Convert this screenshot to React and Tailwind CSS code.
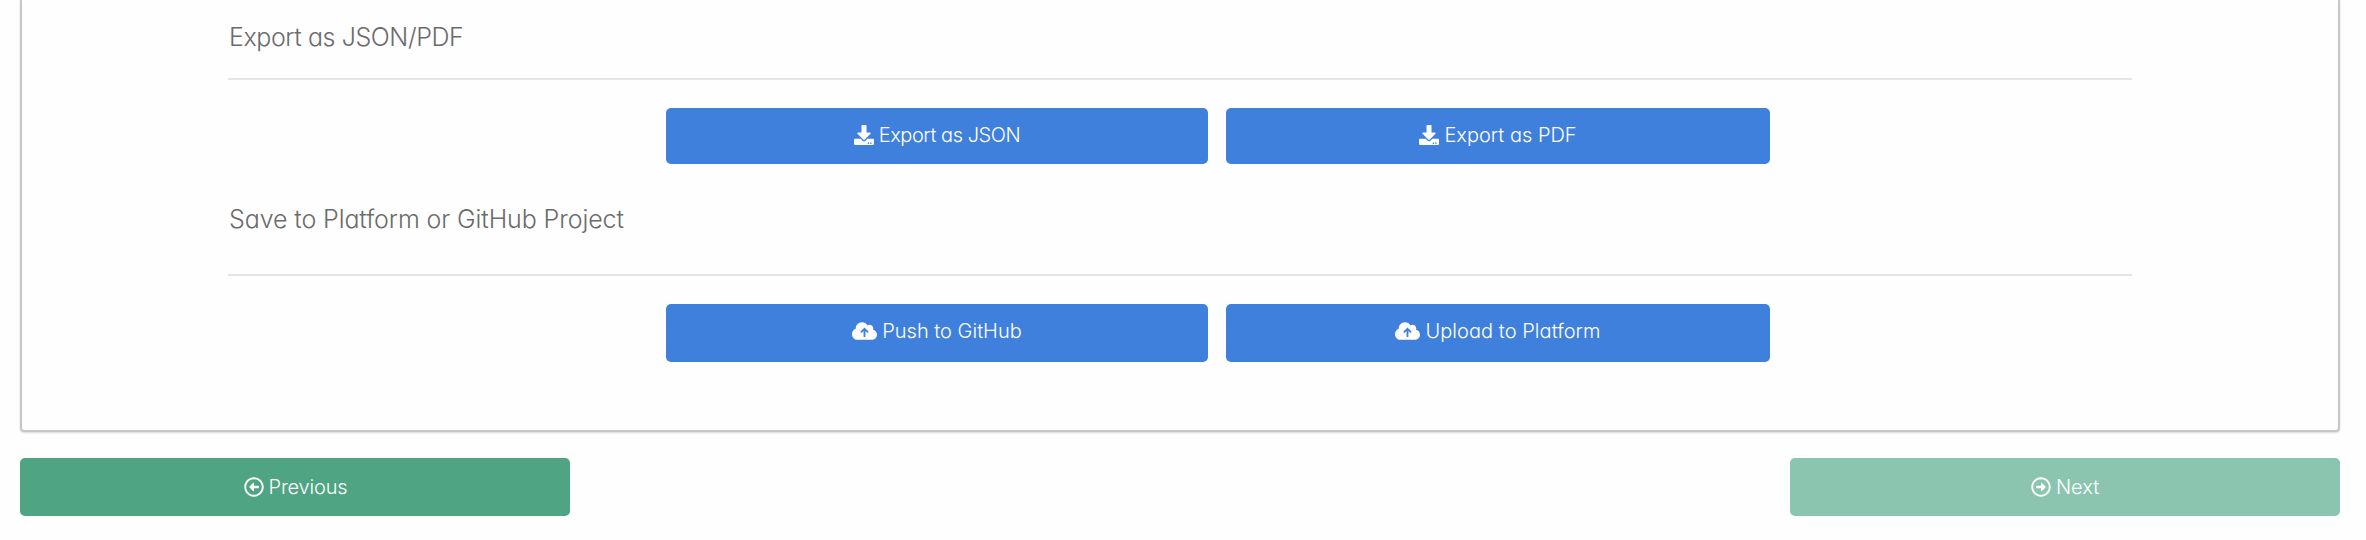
import { FaDownload, FaRegArrowAltCircleLeft, FaRegArrowAltCircleRight } from "react-icons/fa";
import { FaCloudArrowUp } from "react-icons/fa6";

function Button({ icon: Icon, iconClass, className, children, textClass = "" }) {
  return (
    <button className={`flex items-center justify-center rounded-[5px] text-[20px] leading-[30px] text-white ${className}`}>
      <Icon className={`mr-[5px] shrink-0 ${iconClass}`} />
      <span className={textClass}>{children}</span>
    </button>
  );
}

export default function App() {
  return (
    <div className="h-[540px] overflow-hidden bg-[#fefefe] pl-5 pr-[26px] font-['Inter',sans-serif] font-light [font-feature-settings:'cv11']">
      <section className="h-[432px] rounded-b-[4px] border-2 border-t-0 border-[#c6c6c6] px-[206px] shadow-[0_1px_2px_rgba(0,0,0,0.15)]">
        <h2 className="h-[78px] pl-px pt-[17px] text-[25px] leading-[40px] tracking-[-0.42px] text-[#6b6b6b]">
          Export as JSON/PDF
        </h2>
        <hr className="border-t-2 border-[#e5e5e5]" />
        <div className="mt-7 flex gap-[18px] pl-[438px]">
          <Button icon={FaDownload} iconClass="size-5" textClass="tracking-[-0.45px]" className="h-14 w-[542px] bg-[#3f80dc] pb-[3px]">Export as JSON</Button>
          <Button icon={FaDownload} iconClass="size-5" className="h-14 w-[544px] bg-[#3f80dc] pb-[3px]">Export as PDF</Button>
        </div>
        <h2 className="h-[110px] pl-px pt-[35px] text-[25px] leading-[40px] tracking-[-0.1px] text-[#6b6b6b]">
          Save to Platform or GitHub Project
        </h2>
        <hr className="border-t-2 border-[#e5e5e5]" />
        <div className="mt-7 flex gap-[18px] pl-[438px]">
          <Button icon={FaCloudArrowUp} iconClass="h-5 w-[25px]" className="h-[58px] w-[542px] bg-[#3f80dc] pb-1">Push to GitHub</Button>
          <Button icon={FaCloudArrowUp} iconClass="h-5 w-[25px]" textClass="tracking-[0.05px]" className="h-[58px] w-[544px] bg-[#3f80dc] pb-1">Upload to Platform</Button>
        </div>
      </section>
      <nav className="mt-[26px] flex justify-between">
        <Button icon={FaRegArrowAltCircleLeft} iconClass="size-5" textClass="tracking-[-0.2px]" className="h-[58px] w-[550px] bg-[#4fa483] pb-px pl-px">Previous</Button>
        <Button icon={FaRegArrowAltCircleRight} iconClass="size-5" className="h-[58px] w-[550px] bg-[#8bc5b0] pb-px">Next</Button>
      </nav>
    </div>
  );
}
